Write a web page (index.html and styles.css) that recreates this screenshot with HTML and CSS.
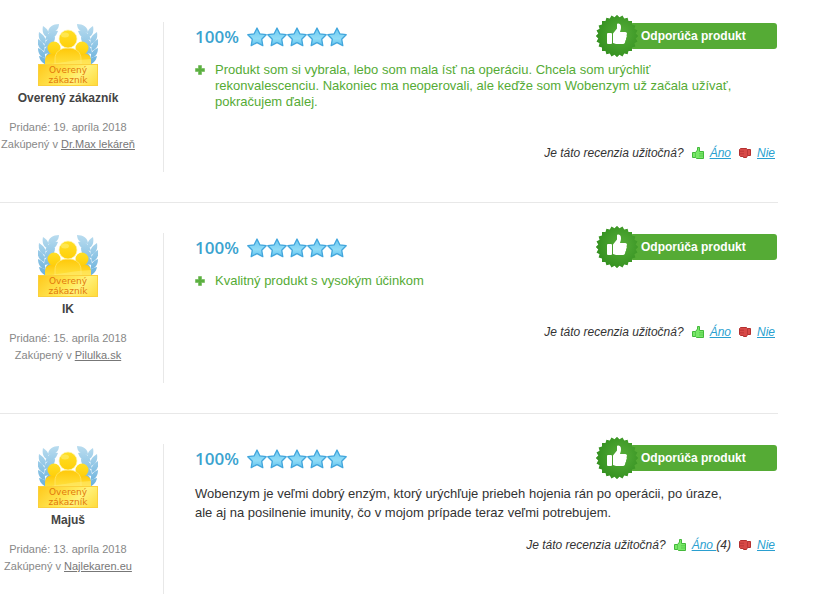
FILE: index.html
```
<!DOCTYPE html>
<html lang="sk">
<head>
    <meta charset="UTF-8">
    <meta name="viewport" content="width=device-width, initial-scale=1.0">
    <title>Recenzie produktu</title>
    <link rel="stylesheet" href="styles.css">
</head>
<body>

    <!-- shared icons -->
    <svg class="icon-defs" width="0" height="0" aria-hidden="true">
        <defs>
            <linearGradient id="head" x1="0" y1="0" x2="0" y2="1">
                <stop offset="0" stop-color="#ffdf25"/>
                <stop offset="1" stop-color="#ffcf0a"/>
            </linearGradient>
            <linearGradient id="shoulders" x1="0" y1="0" x2="0" y2="1">
                <stop offset="0" stop-color="#ffc808"/>
                <stop offset="1" stop-color="#ffe64a"/>
            </linearGradient>
            <linearGradient id="leaf" gradientUnits="userSpaceOnUse" x1="0" y1="0" x2="0" y2="44">
                <stop offset="0" stop-color="#b9dcef"/>
                <stop offset="1" stop-color="#62addb"/>
            </linearGradient>
            <linearGradient id="sky" x1="0" y1="0" x2="0" y2="1">
                <stop offset="0" stop-color="#6cc9f1"/>
                <stop offset="0.6" stop-color="#90dcf7"/>
                <stop offset="1" stop-color="#62c3ee"/>
            </linearGradient>
            <radialGradient id="seal-fill" cx="0.6" cy="0.45" r="0.6">
                <stop offset="0" stop-color="#55ad38"/>
                <stop offset="1" stop-color="#349020"/>
            </radialGradient>
            <clipPath id="seal-teeth">
                <rect x="6" y="6" width="30" height="30"/>
                <rect x="6" y="6" width="30" height="30" transform="rotate(15 21 21)"/>
                <rect x="6" y="6" width="30" height="30" transform="rotate(30 21 21)"/>
                <rect x="6" y="6" width="30" height="30" transform="rotate(45 21 21)"/>
                <rect x="6" y="6" width="30" height="30" transform="rotate(60 21 21)"/>
                <rect x="6" y="6" width="30" height="30" transform="rotate(75 21 21)"/>
            </clipPath>
        </defs>
        <symbol id="laurel" viewBox="0 0 30 44">
            <g fill="url(#leaf)">
                <path d="M10 9C10 3 15 0 21 0C21 6 16 9 10 9Z"/>
                <path d="M7 16C9 9 14 6 20 7C18 13 14 16 7 16Z"/>
                <path d="M6 23C7 16 11 13 17 13C17 19 13 23 6 23Z"/>
                <path d="M6 30C6 23 10 20 16 20C16 26 12 30 6 30Z"/>
                <path d="M7 37C7 30 11 27 16 27C16 33 13 37 7 37Z"/>
                <path d="M9 13C5 11 4 7 5 2C10 5 12 9 9 13Z"/>
                <path d="M7 20C2 18 0 14 1 8C6 11 9 15 7 20Z"/>
                <path d="M6 27C1 25 -1 21 0 15C5 18 8 22 6 27Z"/>
                <path d="M7 34C2 33 0 29 0 24C5 26 8 29 7 34Z"/>
                <path d="M10 41C5 40 2 37 1 32C7 33 10 36 10 41Z"/>
            </g>
        </symbol>
        <symbol id="customers" viewBox="0 0 60 44">
            <use href="#laurel" x="0" y="0" width="30" height="44"/>
            <use href="#laurel" x="0" y="0" width="30" height="44" transform="translate(60 0) scale(-1 1)"/>
            <path d="M7 44V37C7 32 10 29 16 29H44C50 29 53 32 53 37V44Z" fill="url(#shoulders)"/>
            <circle cx="16" cy="24" r="6.5" fill="url(#head)"/>
            <circle cx="44" cy="24" r="6.5" fill="url(#head)"/>
            <path d="M17 44V35C17 28 22 24 30 24C38 24 43 28 43 35V44Z" fill="url(#shoulders)" stroke="#ffe873" stroke-width="0.7"/>
            <circle cx="30" cy="15" r="9" fill="url(#head)" stroke="#fff3ae" stroke-width="0.7"/>
            <ellipse cx="27" cy="11" rx="4" ry="2.5" fill="#ffef70" opacity="0.6"/>
            <path d="M7 41C20 39 36 36 53 35V44H7Z" fill="#fff28c" opacity="0.4"/>
        </symbol>
        <symbol id="star" viewBox="0 0 20 20">
            <path d="M10 1L12.8 6.8L19.2 7.7L14.7 12.2L15.8 18.6L10 15.6L4.2 18.6L5.3 12.2L0.8 7.7L7.2 6.8Z" fill="url(#sky)" stroke="#42a6dc" stroke-width="1.3" stroke-linejoin="round"/>
        </symbol>
        <symbol id="seal" viewBox="0 0 42 42">
            <rect width="42" height="42" fill="url(#seal-fill)" clip-path="url(#seal-teeth)"/>
            <rect x="11" y="18" width="5" height="11" rx="1" fill="#fff"/>
            <path d="M17 18.5L21 13.5V9.5C21 8 25 8 25 12C25 14 24.5 15.5 24 17H29C31 17 31.5 19 30.5 20C31 21.2 30.8 22.4 30 23C30.4 24 30 25.2 29.2 25.8C29.4 27.6 28.6 29 27 29H20C19 29 18 28 17 28Z" fill="#fff"/>
        </symbol>
        <symbol id="plus" viewBox="0 0 10 10">
            <path d="M3.5 0.5H6.5V3.5H9.5V6.5H6.5V9.5H3.5V6.5H0.5V3.5H3.5Z" fill="#5bb03f" stroke="#6ab650" stroke-width="0.6"/>
        </symbol>
        <symbol id="thumb" viewBox="0 0 12 12">
            <path d="M0.5 5.5H3.5L5.5 3V0.5H7.5V4.5H11.5V11.5H4.5L3.5 10.5H0.5Z" fill="#78e868" stroke="#43b83b"/>
            <path d="M3.5 5.5V10.5M7 6.8H11M7 9H11" fill="none" stroke="#43b83b" stroke-width="0.6"/>
        </symbol>
        <symbol id="thumb-down" viewBox="0 0 12 12">
            <path d="M1.5 1.5H7.5L8.5 2.5H11.5V8.5H8.5L7.5 10.5H4.5V9.5H1.5L0.5 8.5V2.5Z" fill="#d84a48" stroke="#b33030"/>
            <path d="M1 4.2H5M1 6.8H5M8.5 2.5V8.5" fill="none" stroke="#a82c2c" stroke-width="0.6"/>
        </symbol>
    </svg>

    <div class="reviews">

        <div class="review">
            <div class="author">
                <div class="badge">
                    <svg class="badge-people" aria-hidden="true"><use href="#customers"/></svg>
                    <div class="badge-label">Overený<br>zákazník</div>
                </div>
                <strong class="name">Overený zákazník</strong>
                <p class="meta">Pridané: 19. apríla 2018<br>Zakúpený v <a href="#">Dr.Max lekáreň</a></p>
            </div>
            <div class="content">
                <div class="heading">
                    <span class="score">100%</span>
                    <span class="stars" role="img" aria-label="5 z 5">
                        <svg><use href="#star"/></svg><svg><use href="#star"/></svg><svg><use href="#star"/></svg><svg><use href="#star"/></svg><svg><use href="#star"/></svg>
                    </span>
                    <div class="recommend">
                        <svg class="seal" aria-hidden="true"><use href="#seal"/></svg>
                        <span class="ribbon">Odporúča produkt</span>
                    </div>
                </div>
                <ul class="pros">
                    <li><svg aria-hidden="true"><use href="#plus"/></svg><span>Produkt som si vybrala, lebo som mala ísť na operáciu. Chcela som urýchliť rekonvalescenciu. Nakoniec ma neoperovali, ale keďže som Wobenzym už začala užívať, pokračujem ďalej.</span></li>
                </ul>
                <div class="helpful">
                    <span>Je táto recenzia užitočná?</span>
                    <span class="vote"><svg aria-hidden="true"><use href="#thumb"/></svg><a href="#">Áno</a></span>
                    <span class="vote"><svg aria-hidden="true"><use href="#thumb-down"/></svg><a href="#">Nie</a></span>
                </div>
            </div>
        </div>

        <div class="review">
            <div class="author">
                <div class="badge">
                    <svg class="badge-people" aria-hidden="true"><use href="#customers"/></svg>
                    <div class="badge-label">Overený<br>zákazník</div>
                </div>
                <strong class="name">IK</strong>
                <p class="meta">Pridané: 15. apríla 2018<br>Zakúpený v <a href="#">Pilulka.sk</a></p>
            </div>
            <div class="content">
                <div class="heading">
                    <span class="score">100%</span>
                    <span class="stars" role="img" aria-label="5 z 5">
                        <svg><use href="#star"/></svg><svg><use href="#star"/></svg><svg><use href="#star"/></svg><svg><use href="#star"/></svg><svg><use href="#star"/></svg>
                    </span>
                    <div class="recommend">
                        <svg class="seal" aria-hidden="true"><use href="#seal"/></svg>
                        <span class="ribbon">Odporúča produkt</span>
                    </div>
                </div>
                <ul class="pros">
                    <li><svg aria-hidden="true"><use href="#plus"/></svg><span>Kvalitný produkt s vysokým účinkom</span></li>
                </ul>
                <div class="helpful">
                    <span>Je táto recenzia užitočná?</span>
                    <span class="vote"><svg aria-hidden="true"><use href="#thumb"/></svg><a href="#">Áno</a></span>
                    <span class="vote"><svg aria-hidden="true"><use href="#thumb-down"/></svg><a href="#">Nie</a></span>
                </div>
            </div>
        </div>

        <div class="review">
            <div class="author">
                <div class="badge">
                    <svg class="badge-people" aria-hidden="true"><use href="#customers"/></svg>
                    <div class="badge-label">Overený<br>zákazník</div>
                </div>
                <strong class="name">Majuš</strong>
                <p class="meta">Pridané: 13. apríla 2018<br>Zakúpený v <a href="#">Najlekaren.eu</a></p>
            </div>
            <div class="content">
                <div class="heading">
                    <span class="score">100%</span>
                    <span class="stars" role="img" aria-label="5 z 5">
                        <svg><use href="#star"/></svg><svg><use href="#star"/></svg><svg><use href="#star"/></svg><svg><use href="#star"/></svg><svg><use href="#star"/></svg>
                    </span>
                    <div class="recommend">
                        <svg class="seal" aria-hidden="true"><use href="#seal"/></svg>
                        <span class="ribbon">Odporúča produkt</span>
                    </div>
                </div>
                <p class="text">Wobenzym je veľmi dobrý enzým, ktorý urýchľuje priebeh hojenia rán po operácii, po úraze, ale aj na posilnenie imunity, čo v mojom prípade teraz veľmi potrebujem.</p>
                <div class="helpful">
                    <span>Je táto recenzia užitočná?</span>
                    <span class="vote"><svg aria-hidden="true"><use href="#thumb"/></svg><span><a href="#">Áno </a>(4)</span></span>
                    <span class="vote"><svg aria-hidden="true"><use href="#thumb-down"/></svg><a href="#">Nie</a></span>
                </div>
            </div>
        </div>

    </div>

</body>
</html>
```
FILE: styles.css
```
body {
    margin: 0;
    background-color: #fff;
    color: #333;
    font-family: "Liberation Sans", Arial, sans-serif;
    font-size: 13px;
}
svg {
    display: block;
    flex-shrink: 0;
}
.icon-defs {
    position: absolute;
}
.reviews {
    margin-right: 35px;
}
.review {
    display: flex;
    padding: 30px 0;
    border-bottom: 1px solid #e8e8e8;
}
.review:first-child {
    padding-top: 22px;
}
.review:last-child {
    padding-bottom: 0;
    border-bottom: none;
}

/* left column */
.author {
    width: 136px;
    min-height: 150px;
    padding-right: 27px;
    border-right: 1px solid #e8e8e8;
    text-align: center;
    flex-shrink: 0;
}
.badge {
    position: relative;
    width: 60px;
    height: 62px;
    margin: 2px auto 4px;
}
.badge-people {
    width: 60px;
    height: 44px;
}
.badge-label {
    position: absolute;
    left: 0;
    right: 0;
    bottom: 0;
    height: 20px;
    border: 1px solid #fbd03c;
    background: linear-gradient(135deg, #ffc91c, #ffe95a 50%, #fff27c 65%, #ffdb3c);
    color: #e2790c;
    font-family: "DejaVu Sans", Verdana, sans-serif;
    font-size: 9px;
    line-height: 10px;
}
.name {
    display: block;
    font-size: 12px;
    line-height: 16px;
    color: #444;
}
.meta {
    margin: 13px 0 0;
    font-size: 11px;
    line-height: 17px;
    color: #888;
    white-space: nowrap;
}
.meta a {
    color: #777;
}

/* right column */
.content {
    flex: 1;
    padding-left: 31px;
}
.heading {
    display: flex;
    align-items: center;
    height: 28px;
    margin-bottom: 12px;
}
.score {
    margin-right: 8px;
    font-family: "Open Sans", sans-serif;
    font-size: 17px;
    font-weight: 600;
    color: #3ba3cf;
}
.stars {
    display: flex;
    padding-top: 2px;
}
.stars svg {
    width: 20px;
    height: 20px;
}
.recommend {
    display: flex;
    align-items: center;
    margin-left: auto;
    margin-right: 1px;
}
.seal {
    position: relative;
    width: 42px;
    height: 42px;
    margin-right: -8px;
}
.ribbon {
    width: 136px;
    padding-left: 11px;
    border-radius: 3px;
    background-color: #55ab35;
    color: #fff;
    font-size: 12px;
    font-weight: bold;
    line-height: 26px;
}
.pros {
    margin: 0;
    padding: 0 40px 20px 0;
    list-style: none;
    color: #55ab35;
    line-height: 16px;
}
.pros li {
    display: flex;
    gap: 10px;
}
.pros svg {
    width: 10px;
    height: 10px;
    margin-top: 3px;
}
.text {
    margin: 0;
    padding-right: 40px;
    line-height: 19px;
}
.helpful {
    display: flex;
    justify-content: flex-end;
    gap: 8px;
    margin: 15px 3px 0 0;
    font-size: 12px;
    font-style: italic;
    line-height: 16px;
}
.vote {
    display: flex;
    align-items: center;
    gap: 6px;
}
.vote svg {
    width: 12px;
    height: 12px;
}
.helpful a {
    color: #2a9fd0;
}
```
